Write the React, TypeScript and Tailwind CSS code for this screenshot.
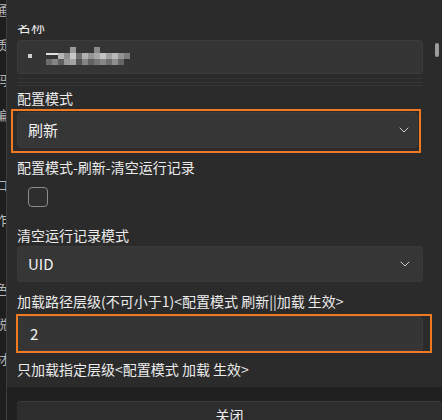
import { ChevronDown } from 'lucide-react'

const sideChars = ['通', '质', '码', '编', '', '口', '作', '', '色', '锐', '材', '']

const mosaic: [number, number, number, number, string][] = [
  [51, 0, 6, 6, '#9a9a9a'],
  [75, 0, 6, 6, '#8a8a8a'],
  [9, 7, 4, 4, '#cfcfcf'],
  [27, 6, 12, 2, '#e0e0e0'],
  [39, 6, 6, 6, '#b5b5b5'],
  [45, 6, 6, 6, '#8f8f8f'],
  [51, 6, 6, 6, '#c8c8c8'],
  [57, 6, 6, 6, '#6f6f6f'],
  [63, 6, 6, 6, '#b0b0b0'],
  [69, 6, 6, 6, '#949494'],
  [75, 6, 6, 6, '#a8a8a8'],
  [81, 6, 6, 6, '#c2c2c2'],
  [87, 6, 6, 6, '#a0a0a0'],
  [93, 6, 6, 6, '#b8b8b8'],
  [99, 6, 6, 6, '#939393'],
  [105, 6, 6, 6, '#7c7c7c'],
  [27, 12, 6, 6, '#6c6c6c'],
  [33, 12, 6, 6, '#858585'],
  [39, 12, 6, 6, '#5e5e5e'],
  [45, 12, 6, 6, '#999999'],
  [51, 12, 6, 6, '#a4a4a4'],
  [57, 12, 6, 6, '#555555'],
  [63, 12, 6, 6, '#848484'],
  [69, 12, 6, 6, '#626262'],
  [75, 12, 6, 6, '#757575'],
  [81, 12, 6, 6, '#878787'],
  [87, 12, 6, 6, '#6f6f6f'],
  [93, 12, 6, 6, '#8e8e8e'],
  [99, 12, 6, 6, '#666666'],
]

function Select({ value, className }: { value: string; className?: string }) {
  return (
    <div
      className={`flex h-[36px] items-center justify-between rounded-[4px] border border-[#3a3a3a] bg-[#363636] pl-[10px] text-[15px] text-[#f2f2f2] ${className ?? ''}`}
    >
      <span>{value}</span>
      <ChevronDown size={16} strokeWidth={1.5} className="text-[#cfcfcf]" />
    </div>
  )
}

export default function App() {
  return (
    <div className="flex h-[420px] w-[442px] overflow-hidden bg-[#2b2b2b] font-['Noto_Sans_CJK_SC','Noto_Sans',sans-serif] text-[14px] leading-[20px] text-[#ececec]">
      <div className="flex w-[7px] shrink-0 flex-col overflow-hidden border-r border-[#3d3d3d] bg-[#1e1e1e] pt-[1px]">
        {sideChars.map((c, i) => (
          <div key={i} className="-ml-[5px] h-[36px] text-[13px] leading-[18px] text-[#b8b8b8]">
            {c}
          </div>
        ))}
      </div>

      <div className="relative flex min-w-0 flex-1 flex-col">
        <div className="flex flex-1 flex-col pl-[10px] pr-[19px] pb-[8px]">
          <div className="mt-[25px] h-[9px] overflow-hidden">
            <div className="-mt-[9px]">名称</div>
          </div>

          <div className="mt-[6px] flex h-[34px] items-center rounded-[4px] border border-[#3c3c3c] bg-[#353535]">
            <svg width="120" height="20" className="ml-[1px]">
              {mosaic.map(([x, y, w, h, fill], i) => (
                <rect key={i} x={x} y={y} width={w} height={h} fill={fill} />
              ))}
            </svg>
          </div>
          <div className="h-[12px] border-b border-[#363636]">
            <div className="mt-[4px] h-px bg-[#333333]" />
            <div className="mt-[3px] h-px bg-[#383838]" />
          </div>

          <div className="mt-[2px]">配置模式</div>
          <div className="relative mt-[4px] mr-[5px]">
            <Select value="刷新" className="pr-[5px]" />
            <div className="pointer-events-none absolute -top-[3px] -bottom-[5px] -left-[6px] -right-[3px] border-2 border-[#f07a22]" />
          </div>

          <div className="mt-[9px]">配置模式-刷新-清空运行记录</div>
          <div className="mt-[10px] ml-[11px] h-[20px] w-[20px] rounded-[4px] border border-[#8c8c8c] bg-[#2e2e2e]" />

          <div className="mt-[18px]">清空运行记录模式</div>
          <Select value="UID" className="mt-[1px] pr-[9px]" />

          <div className="mt-[9px]">加载路径层级(不可小于1)&lt;配置模式 刷新||加载 生效&gt;</div>
          <div className="relative mt-[5px]">
            <div className="flex h-[35px] items-center rounded-[4px] border border-[#3c3c3c] bg-[#353535] pl-[12px] text-[15px] text-[#f2f2f2]">
              2
            </div>
            <div className="pointer-events-none absolute -top-[2px] -bottom-[2px] -left-[1px] -right-[9px] border-2 border-[#f07a22]" />
          </div>

          <div className="mt-[8px]">只加载指定层级&lt;配置模式 加载 生效&gt;</div>
        </div>

        <div className="h-[33px] shrink-0 bg-[#202020] pl-[10px] pt-[14px]">
          <div className="flex h-[36px] w-[425px] items-start justify-center rounded-[4px] border-t border-[#3a3a3a] bg-[#2d2d2d] pt-[3px] text-[14px] text-[#ececec]">
            关闭
          </div>
        </div>

        <div className="absolute left-[428px] top-[43px] h-[14px] w-[4px] rounded-full bg-[#9c9c9c]" />
      </div>
    </div>
  )
}
